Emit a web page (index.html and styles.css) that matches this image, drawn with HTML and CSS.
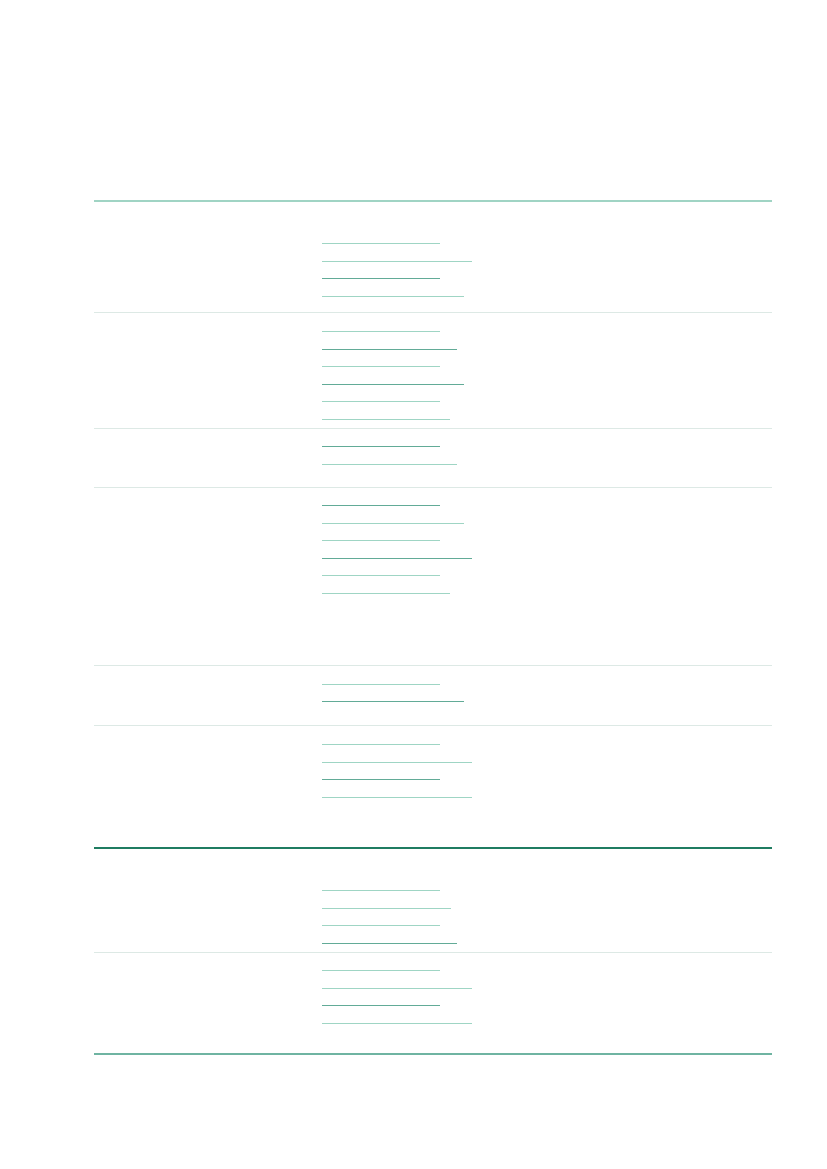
FILE: index.html
```html
<!DOCTYPE html>
<html lang="en">
<head>
<meta charset="utf-8">
<title>Table</title>
<link rel="stylesheet" href="styles.css">
</head>
<body>
<div class="page">
  <div class="table">
    <div class="row r1 first">
      <div class="cell"></div>
      <div class="cell links">
        <span class="lk w118"></span>
        <span class="lk w150"></span>
        <span class="lk w118 dk"></span>
        <span class="lk w142"></span>
      </div>
      <div class="cell"></div>
    </div>
    <div class="row r2">
      <div class="cell"></div>
      <div class="cell links">
        <span class="lk w118"></span>
        <span class="lk w135 dk"></span>
        <span class="lk w118"></span>
        <span class="lk w142 dk"></span>
        <span class="lk w118"></span>
        <span class="lk w128"></span>
      </div>
      <div class="cell"></div>
    </div>
    <div class="row r3">
      <div class="cell"></div>
      <div class="cell links">
        <span class="lk w118 dk"></span>
        <span class="lk w135"></span>
      </div>
      <div class="cell"></div>
    </div>
    <div class="row r4">
      <div class="cell"></div>
      <div class="cell links">
        <span class="lk w118 dk"></span>
        <span class="lk w142"></span>
        <span class="lk w118"></span>
        <span class="lk w150 dk"></span>
        <span class="lk w118"></span>
        <span class="lk w128"></span>
      </div>
      <div class="cell"></div>
    </div>
    <div class="row r5">
      <div class="cell"></div>
      <div class="cell links">
        <span class="lk w118"></span>
        <span class="lk w142 dk"></span>
      </div>
      <div class="cell"></div>
    </div>
    <div class="row r6">
      <div class="cell"></div>
      <div class="cell links">
        <span class="lk w118"></span>
        <span class="lk w150"></span>
        <span class="lk w118 dk"></span>
        <span class="lk w150"></span>
      </div>
      <div class="cell"></div>
    </div>
    <div class="row r7 strong">
      <div class="cell"></div>
      <div class="cell links">
        <span class="lk w118"></span>
        <span class="lk w129"></span>
        <span class="lk w118"></span>
        <span class="lk w135 dk"></span>
      </div>
      <div class="cell"></div>
    </div>
    <div class="row r8 last">
      <div class="cell"></div>
      <div class="cell links">
        <span class="lk w118"></span>
        <span class="lk w150"></span>
        <span class="lk w118 dk"></span>
        <span class="lk w150"></span>
      </div>
      <div class="cell"></div>
    </div>
  </div>
</div>
</body>
</html>
```
FILE: styles.css
```css
html, body {
  margin: 0;
  padding: 0;
  background: #ffffff;
  font-family: "Liberation Sans", Arial, sans-serif;
}
.page {
  padding: 200px 55px 0 94px;
  width: 678px;
}
.table {
  width: 678px;
}
.row {
  display: grid;
  grid-template-columns: 206px 257px 215px;
  box-sizing: border-box;
}
.cell {
  box-sizing: border-box;
  border-top: 1px solid #dde9e5;
}
.row.first .cell {
  border-top: 2px solid #a0d4c4;
}
.row.strong .cell {
  border-top: 2px solid #1f7c61;
}
.row.last .cell {
  border-bottom: 2px solid #6fb4a2;
}
.links {
  display: flex;
  flex-direction: column;
  padding-left: 22px;
}
.lk {
  display: block;
  height: 16.5px;
  flex: none;
  border-bottom: 1px solid #9fd5c4;
}
.lk.dk {
  border-bottom-color: #62ab97;
}
.w118 { width: 118px; }
.w128 { width: 128px; }
.w129 { width: 129px; }
.w135 { width: 135px; }
.w142 { width: 142px; }
.w150 { width: 150px; }

.r1 { height: 112px; }
.r1 .links { padding-top: 24.5px; }
.r2 { height: 116px; }
.r2 .links { padding-top: 1.5px; }
.r3 { height: 59px; }
.r3 .links { padding-top: 0.5px; }
.r4 { height: 178px; }
.r4 .links { padding-top: 0.5px; }
.r5 { height: 60px; }
.r5 .links { padding-top: 1px; }
.r6 { height: 122px; }
.r6 .links { padding-top: 1.5px; }
.r7 { height: 105px; }
.r7 .links { padding-top: 24.5px; }
.r8 { height: 103px; }
.r8 .links { padding-top: 0.5px; }
```
